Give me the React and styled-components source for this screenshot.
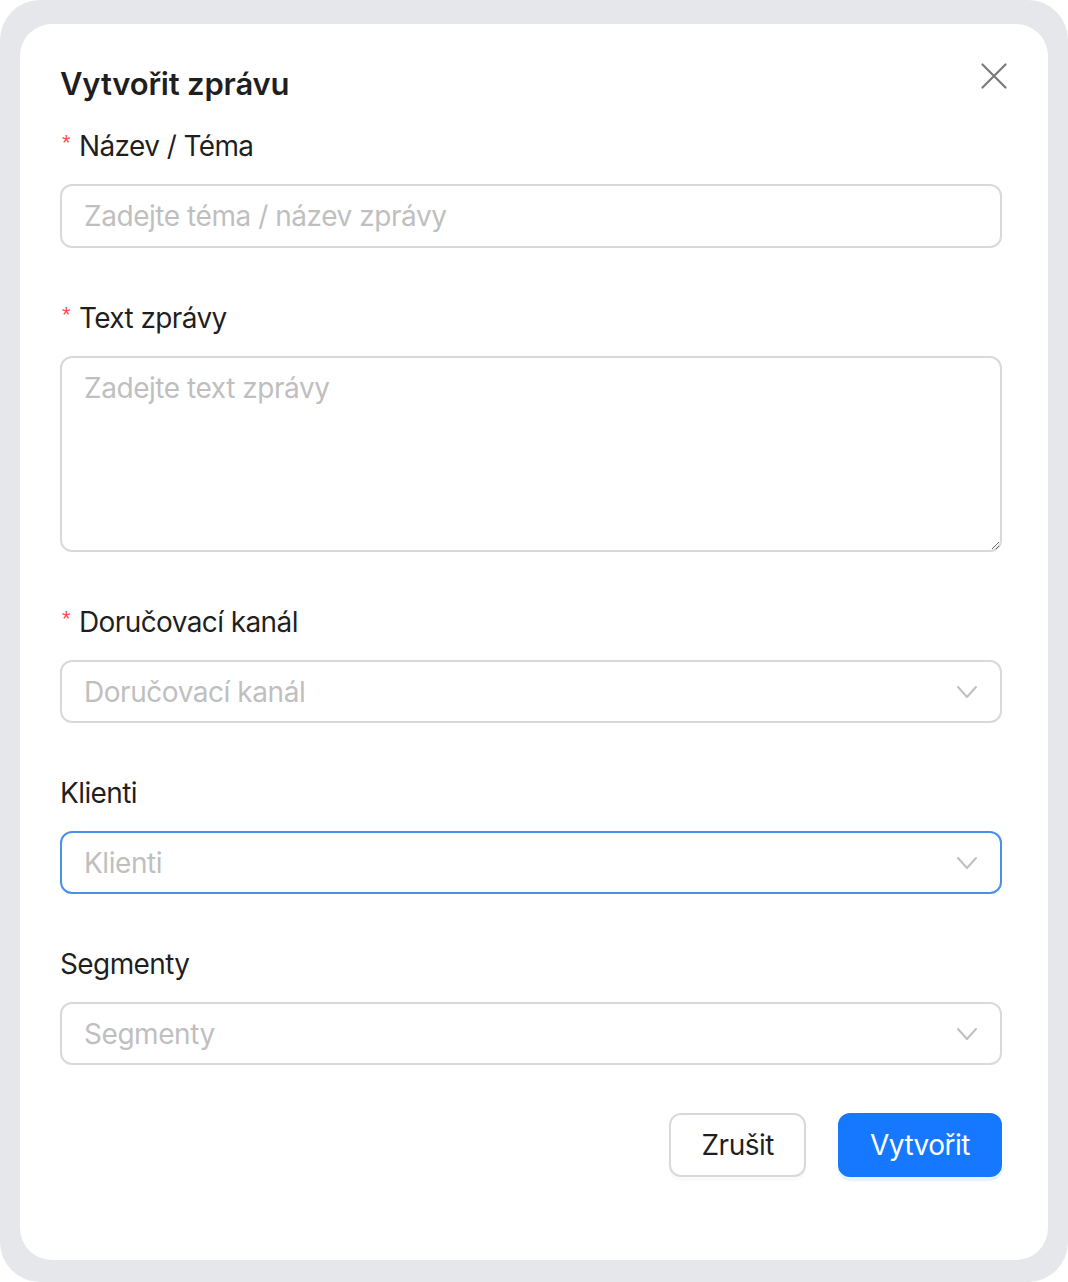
import React from 'react';
import styled, { createGlobalStyle } from 'styled-components';

const GlobalStyle = createGlobalStyle`
  html, body {
    margin: 0;
    padding: 0;
    background: #ffffff;
  }
  * {
    box-sizing: border-box;
  }
`;

const Frame = styled.div`
  width: 1068px;
  height: 1282px;
  background: #e5e7eb;
  border-radius: 40px;
  padding: 24px 20px 22px 20px;
  font-family: Inter, "Noto Sans", "Liberation Sans", sans-serif;
`;

const Card = styled.div`
  position: relative;
  height: 100%;
  background: #ffffff;
  border-radius: 32px;
  padding: 36px 46px 82px 40px;
  display: flex;
  flex-direction: column;
`;

const Title = styled.h2`
  margin: 0 0 16px 0;
  font-size: 31px;
  line-height: 48px;
  font-weight: 600;
  letter-spacing: -0.2px;
  color: rgba(0, 0, 0, 0.88);
`;

const CloseButton = styled.button`
  position: absolute;
  top: 30px;
  right: 32px;
  width: 44px;
  height: 44px;
  border: none;
  background: transparent;
  padding: 0;
  display: flex;
  align-items: center;
  justify-content: center;
  cursor: pointer;
`;

const FormItem = styled.div`
  display: flex;
  flex-direction: column;
  margin-bottom: 48px;
`;

const Label = styled.label`
  display: flex;
  align-items: center;
  height: 44px;
  margin-bottom: 16px;
  font-size: 28px;
  letter-spacing: -0.6px;
  color: rgba(0, 0, 0, 0.88);
`;

const Required = styled.span`
  color: #ff4d4f;
  font-family: "Liberation Sans", sans-serif;
  font-size: 22px;
  line-height: 1;
  margin-right: 9px;
  margin-left: 2px;
  position: relative;
  top: -3px;
`;

const fieldBase = `
  width: 100%;
  border: 2px solid #d9d9d9;
  border-radius: 12px;
  background: #ffffff;
  font-family: Inter, "Noto Sans", "Liberation Sans", sans-serif;
  font-size: 28px;
  letter-spacing: -0.45px;
  color: rgba(0, 0, 0, 0.88);
  outline: none;
`;

const Input = styled.input`
  ${fieldBase}
  height: 64px;
  padding: 0 22px;
  &::placeholder {
    color: #bfbfbf;
  }
`;

const TextArea = styled.textarea`
  ${fieldBase}
  height: 196px;
  padding: 8px 22px;
  line-height: 44px;
  resize: vertical;
  &::placeholder {
    color: #bfbfbf;
  }
`;

const Select = styled.div`
  ${fieldBase}
  height: 63px;
  padding: 0 22px 0 22px;
  display: flex;
  align-items: center;
  justify-content: space-between;
  border-color: ${(p) => (p.$active ? '#4a90e8' : '#d9d9d9')};
`;

const Placeholder = styled.span`
  color: #bfbfbf;
`;

const Footer = styled.div`
  display: flex;
  justify-content: flex-end;
  gap: 32px;
`;

const Button = styled.button`
  height: 64px;
  padding: 0 30px;
  border-radius: 12px;
  font-family: Inter, "Noto Sans", "Liberation Sans", sans-serif;
  font-size: 28px;
  letter-spacing: -0.5px;
  cursor: pointer;
  border: 2px solid ${(p) => (p.$primary ? '#1677ff' : '#d9d9d9')};
  background: ${(p) => (p.$primary ? '#1677ff' : '#ffffff')};
  color: ${(p) => (p.$primary ? '#ffffff' : 'rgba(0, 0, 0, 0.88)')};
  box-shadow: ${(p) =>
    p.$primary ? '0 4px 0 rgba(5, 145, 255, 0.1)' : '0 4px 0 rgba(0, 0, 0, 0.02)'};
`;

const CloseIcon = () => (
  <svg width="26" height="26" viewBox="0 0 26 26">
    <path d="M1.5 1.5 L24.5 24.5 M24.5 1.5 L1.5 24.5" stroke="#7a7a7a" strokeWidth="2.2" strokeLinecap="round" />
  </svg>
);

const Chevron = () => (
  <svg width="22" height="14" viewBox="0 0 22 14">
    <polyline points="2,2 11,12 20,2" fill="none" stroke="#bfbfbf" strokeWidth="2" strokeLinejoin="round" strokeLinecap="round" />
  </svg>
);

const SelectField = ({ placeholder, active }) => (
  <Select $active={active}>
    <Placeholder>{placeholder}</Placeholder>
    <Chevron />
  </Select>
);

export default function App() {
  return (
    <>
      <GlobalStyle />
      <Frame>
        <Card>
          <CloseButton aria-label="Zavřít">
            <CloseIcon />
          </CloseButton>
          <Title>Vytvořit zprávu</Title>

          <FormItem>
            <Label><Required>*</Required>Název / Téma</Label>
            <Input placeholder="Zadejte téma / název zprávy" />
          </FormItem>

          <FormItem>
            <Label><Required>*</Required>Text zprávy</Label>
            <TextArea placeholder="Zadejte text zprávy" />
          </FormItem>

          <FormItem>
            <Label><Required>*</Required>Doručovací kanál</Label>
            <SelectField placeholder="Doručovací kanál" />
          </FormItem>

          <FormItem>
            <Label>Klienti</Label>
            <SelectField placeholder="Klienti" active />
          </FormItem>

          <FormItem>
            <Label>Segmenty</Label>
            <SelectField placeholder="Segmenty" />
          </FormItem>

          <Footer>
            <Button>Zrušit</Button>
            <Button $primary>Vytvořit</Button>
          </Footer>
        </Card>
      </Frame>
    </>
  );
}
